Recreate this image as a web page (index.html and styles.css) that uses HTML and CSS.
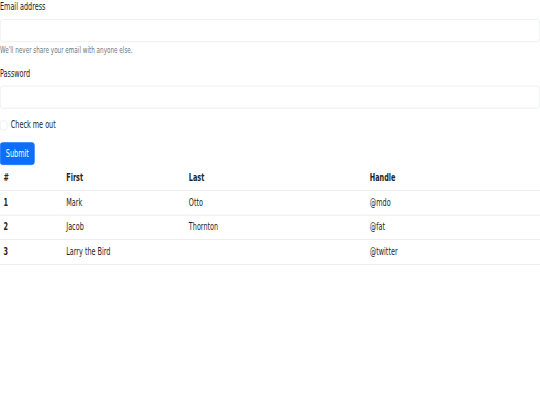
FILE: index.html
```html
<!DOCTYPE html>
<html>
<head>
    <title>Form and table</title>
    <link rel="stylesheet" href="styles.css">
</head>
<body>
    <div class="viewport">
        <div class="page">
            <form class="signup-form">
                <div class="field">
                    <label class="field-label" for="email">Email address</label>
                    <input type="email" class="field-input" id="email">
                    <div class="field-help">We'll never share your email with anyone else.</div>
                </div>
                <div class="field">
                    <label class="field-label" for="password">Password</label>
                    <input type="password" class="field-input" id="password">
                </div>
                <div class="field check-row">
                    <input type="checkbox" class="check-input" id="check">
                    <label class="check-label" for="check">Check me out</label>
                </div>
                <button type="submit" class="submit-btn">Submit</button>
            </form>

            <table class="data-table">
                <thead>
                    <tr>
                        <th>#</th>
                        <th>First</th>
                        <th>Last</th>
                        <th>Handle</th>
                    </tr>
                </thead>
                <tbody>
                    <tr>
                        <th>1</th>
                        <td>Mark</td>
                        <td>Otto</td>
                        <td>@mdo</td>
                    </tr>
                    <tr>
                        <th>2</th>
                        <td>Jacob</td>
                        <td>Thornton</td>
                        <td>@fat</td>
                    </tr>
                    <tr>
                        <th>3</th>
                        <td colspan="2">Larry the Bird</td>
                        <td>@twitter</td>
                    </tr>
                </tbody>
            </table>
        </div>
    </div>
</body>
</html>
```

FILE: styles.css
```css
:root {
    --text-color: #212529;
    --muted-color: #6c757d;
    --border-color: #dee2e6;
    --primary-color: #0d6efd;
}

* {
    box-sizing: border-box;
}

html, body {
    margin: 0;
    overflow: hidden;
}

body {
    background-color: #ffffff;
    color: var(--text-color);
    font-family: "DejaVu Sans Condensed", "DejaVu Sans", sans-serif;
    font-size: 16px;
    line-height: 1.5;
}

.viewport {
    width: 540px;
    height: 405px;
    overflow: hidden;
}

/* the page is laid out at 1200x675 and squeezed into the window */
.page {
    width: 1200px;
    transform: scale(0.45, 0.6);
    transform-origin: 0 0;
}

/* ========== Form ========== */
.field {
    margin-bottom: 16px;
}

.field-label {
    display: inline-block;
    margin-bottom: 8px;
}

.field-input {
    display: block;
    width: 100%;
    height: 38px;
    padding: 6px 12px;
    font: inherit;
    color: var(--text-color);
    background-color: #ffffff;
    border: 1px solid var(--border-color);
    border-radius: 6px;
}

.field-help {
    margin-top: 4px;
    font-size: 14px;
    color: var(--muted-color);
}

.check-row {
    min-height: 24px;
    padding-left: 24px;
}

.check-input {
    float: left;
    width: 16px;
    height: 16px;
    margin: 4px 0 0 -24px;
    appearance: none;
    border: 1px solid var(--border-color);
    border-radius: 4px;
    background-color: #ffffff;
}

.submit-btn {
    display: inline-block;
    height: 38px;
    padding: 6px 12px;
    font: inherit;
    color: #ffffff;
    background-color: var(--primary-color);
    border: 1px solid var(--primary-color);
    border-radius: 6px;
}

/* ========== Table ========== */
.data-table {
    width: 100%;
    margin-top: 1px;
    border-collapse: collapse;
    vertical-align: top;
}

.data-table th,
.data-table td {
    padding: 8px;
    text-align: left;
    border-bottom: 1px solid var(--border-color);
}

.data-table thead th {
    padding-top: 9px;
    vertical-align: bottom;
}

.data-table th {
    font-weight: bold;
}

.data-table td {
    font-weight: normal;
}
```
